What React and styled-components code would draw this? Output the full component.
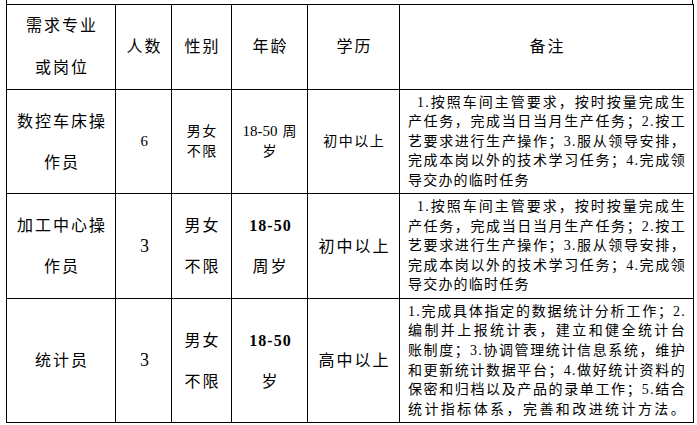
import styled, { createGlobalStyle } from 'styled-components';

const GlobalStyle = createGlobalStyle`
  body {
    margin: 0;
    background: #fff;
    color: #000;
    font-family: "Liberation Serif", "Noto Sans CJK SC", serif;
  }
`;

const Page = styled.div`
  padding-left: 6px;
`;

const TopEdge = styled.div`
  box-sizing: border-box;
  width: 687px;
  height: 4px;
  border-left: 1px solid #000;
  border-right: 1px solid #000;
`;

const Table = styled.table`
  border-collapse: collapse;
  table-layout: fixed;
  width: 687px;
`;

const Row = styled.tr`
  height: ${(p) => p.$h}px;
`;

const sizes = {
  big: { font: 16, ls: 2, lh: 41 },
  small: { font: 14, ls: 1.5, lh: 20 },
};

const Cell = styled.td`
  border: 1px solid #000;
  padding: 0 0 0 ${(p) => sizes[p.$size || 'big'].ls}px;
  text-align: center;
  vertical-align: middle;
  font-size: ${(p) => sizes[p.$size || 'big'].font}px;
  letter-spacing: ${(p) => sizes[p.$size || 'big'].ls}px;
  line-height: ${(p) => sizes[p.$size || 'big'].lh}px;
`;

const Line = styled.span`
  display: block;
`;

const Num = styled.span`
  font-family: "Liberation Serif", serif;
  font-size: ${(p) => p.$font || 16}px;
  font-weight: ${(p) => (p.$bold ? 700 : 400)};
  letter-spacing: ${(p) => (p.$bold ? 1 : 0)}px;
`;

const RemarkCell = styled.td`
  border: 1px solid #000;
  padding: 0 7px 0 8px;
  vertical-align: middle;
  font-size: 14px;
  line-height: 19.6px;
  letter-spacing: 1.2px;
`;

const RemarkLine = styled.span`
  display: block;
  text-align: justify;
  text-align-last: ${(p) => (p.$last ? 'left' : 'justify')};
  text-indent: ${(p) => (p.$indent ? 9 : 0)}px;
`;

const Head = styled.td`
  border: 1px solid #000;
  padding: 0 0 0 2px;
  text-align: center;
  vertical-align: middle;
  font-size: 16px;
  letter-spacing: 2px;
  line-height: 42px;
`;

const jobTasks = [
  '1.按照车间主管要求，按时按量完成生',
  '产任务，完成当日当月生产任务；2.按工',
  '艺要求进行生产操作；3.服从领导安排，',
  '完成本岗以外的技术学习任务；4.完成领',
  '导交办的临时任务',
];

const statTasks = [
  '1.完成具体指定的数据统计分析工作；2.',
  '编制并上报统计表，建立和健全统计台',
  '账制度；3.协调管理统计信息系统，维护',
  '和更新统计数据平台；4.做好统计资料的',
  '保密和归档以及产品的录单工作；5.结合',
  '统计指标体系，完善和改进统计方法。',
];

function Remark({ lines, indent, fillLast }) {
  return (
    <RemarkCell>
      {lines.map((t, i) => (
        <RemarkLine
          key={i}
          $indent={indent && i === 0}
          $last={i === lines.length - 1 && !fillLast}
        >
          {t}
        </RemarkLine>
      ))}
    </RemarkCell>
  );
}

export default function App() {
  return (
    <Page>
      <GlobalStyle />
      <TopEdge />
      <Table>
        <colgroup>
          <col style={{ width: 109 }} />
          <col style={{ width: 56 }} />
          <col style={{ width: 60 }} />
          <col style={{ width: 76 }} />
          <col style={{ width: 92 }} />
          <col style={{ width: 294 }} />
        </colgroup>
        <tbody>
          <Row $h={84}>
            <Head>
              <Line>需求专业</Line>
              <Line>或岗位</Line>
            </Head>
            <Head>人数</Head>
            <Head>性别</Head>
            <Head>年龄</Head>
            <Head>学历</Head>
            <Head>备注</Head>
          </Row>

          <Row $h={104}>
            <Cell>
              <Line>数控车床操</Line>
              <Line>作员</Line>
            </Cell>
            <Cell $size="small">
              <Num $font={15}>6</Num>
            </Cell>
            <Cell $size="small">
              <Line>男女</Line>
              <Line>不限</Line>
            </Cell>
            <Cell $size="small">
              <Line>
                <Num $font={15}>18-50</Num> 周
              </Line>
              <Line>岁</Line>
            </Cell>
            <Cell $size="small">初中以上</Cell>
            <Remark lines={jobTasks} indent />
          </Row>

          <Row $h={105}>
            <Cell>
              <Line>加工中心操</Line>
              <Line>作员</Line>
            </Cell>
            <Cell>
              <Num $font={18}>3</Num>
            </Cell>
            <Cell>
              <Line>男女</Line>
              <Line>不限</Line>
            </Cell>
            <Cell>
              <Line>
                <Num $bold>18-50</Num>
              </Line>
              <Line>周岁</Line>
            </Cell>
            <Cell>初中以上</Cell>
            <Remark lines={jobTasks} indent />
          </Row>

          <Row $h={124}>
            <Cell>统计员</Cell>
            <Cell>
              <Num $font={18}>3</Num>
            </Cell>
            <Cell>
              <Line>男女</Line>
              <Line>不限</Line>
            </Cell>
            <Cell>
              <Line>
                <Num $bold>18-50</Num>
              </Line>
              <Line>岁</Line>
            </Cell>
            <Cell>高中以上</Cell>
            <Remark lines={statTasks} fillLast />
          </Row>
        </tbody>
      </Table>
    </Page>
  );
}
